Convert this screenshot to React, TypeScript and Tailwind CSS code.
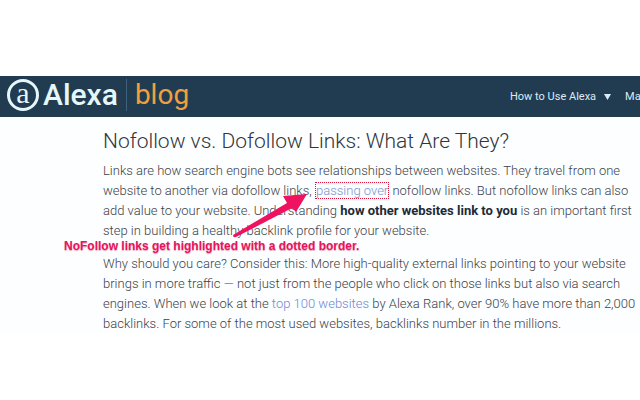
import React from 'react';

const AlexaMark: React.FC = () => (
  <span className="flex size-8 shrink-0 items-center justify-center rounded-full border-3 border-[#e6f7fa] pb-1 font-['Liberation_Serif',serif] text-[30px] leading-6 text-[#e6f7fa]">
    a
  </span>
);

const Header: React.FC = () => (
  <header className="flex h-[41px] items-center bg-[#213b51] pl-[7px] font-['Roboto',sans-serif]">
    <a href="#home" className="flex shrink-0 items-center pb-1">
      <AlexaMark />
      <span className="ml-1 text-[30px] leading-8 font-medium text-[#e6f7fa]">Alexa</span>
      <span className="mx-2 h-8 w-px bg-[#40617c]" />
      <span className="text-[28px] leading-8 text-[#f0a040]">blog</span>
    </a>
    <nav className="ml-auto flex w-[130px] shrink-0 items-center gap-3.5 text-[11px] leading-4 whitespace-nowrap text-[#dcebf5]">
      <button type="button" className="flex items-center gap-2">
        How to Use Alexa
        <svg className="h-[6px] w-[7px]" viewBox="0 0 7 6" fill="currentColor">
          <path d="M0 0h7L3.500 6z" />
        </svg>
      </button>
      <a href="#ma">Ma</a>
    </nav>
  </header>
);

// Pink callout that points at the highlighted nofollow link
const Callout: React.FC = () => (
  <>
    <svg className="absolute top-[24px] left-[128px] h-[56px] w-[80px]" viewBox="0 0 80 56" fill="#f0125f">
      <path d="M2 50 L56 18 L52 11 L76 9 L65 27 L61 23 L5 52 Q2 53 2 50Z" />
    </svg>
    <p className="absolute top-[77px] -left-[39px] font-['Liberation_Sans',sans-serif] text-[12px] leading-4 font-bold whitespace-nowrap text-[#e8145c] [text-shadow:0_1px_1px_#e8a0b8]">
      NoFollow links get highlighted with a dotted border.
    </p>
  </>
);

const App: React.FC = () => {
  return (
    <div className="min-h-screen overflow-x-hidden bg-white pt-[76px]">
      <Header />
      <main className="bg-[#fdfeff] pt-2 pl-[103px] font-['Roboto',sans-serif] text-[13px] leading-5 font-light whitespace-nowrap text-[#3c4248]">
        <h1 className="mb-1 text-[21px] leading-8 font-light text-[#30363b]">
          Nofollow vs. Dofollow Links: What Are They?
        </h1>
        <div className="relative">
          <p className="mb-[13px]">
            Links are how search engine bots see relationships between websites. They travel from one
            <br />
            website to another via dofollow links,{' '}
            <a href="#passing" className="border border-dotted border-[#e00f35] text-[#7894d0]">passing over</a>{' '}
            nofollow links. But nofollow links can also
            <br />
            add value to your website. Understanding{' '}
            <strong className="font-bold text-[#1c2b36]">how other websites link to you</strong> is an important first
            <br />
            step in building a healthy backlink profile for your website.
          </p>
          <Callout />
        </div>
        <p>
          Why should you care? Consider this: More high-quality external links pointing to your website
          <br />
          brings in more traffic — not just from the people who click on those links but also via search
          <br />
          engines. When we look at the <a href="#top" className="text-[#7088d8]">top 100 websites</a> by Alexa Rank, over 90% have more than 2,000
          <br />
          backlinks. For some of the most used websites, backlinks number in the millions.
        </p>
      </main>
    </div>
  );
};

export default App;
